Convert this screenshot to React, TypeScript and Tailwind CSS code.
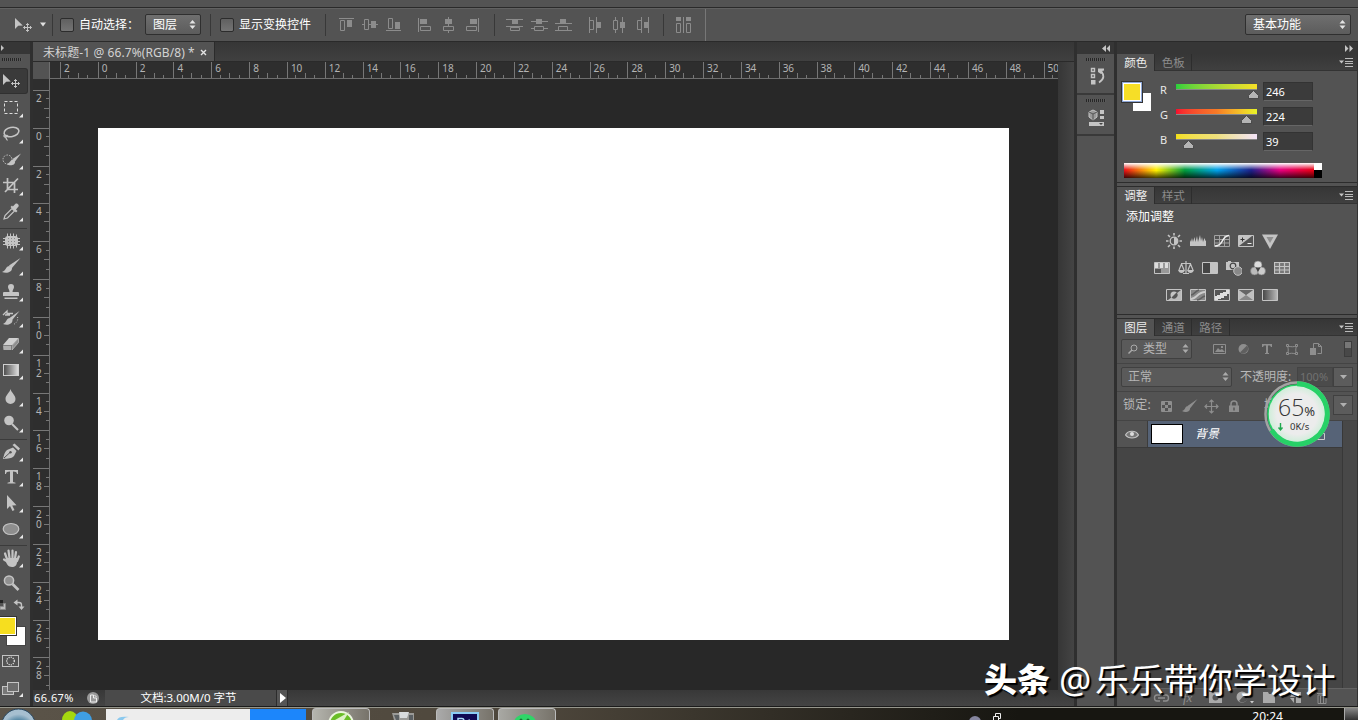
import type { ReactNode } from "react";
import clsx from "clsx";

function Svg({ w, h, children, className }: { w: number; h: number; children: ReactNode; className?: string }) {
  return (
    <svg width={w} height={h} viewBox={`0 0 ${w} ${h}`} className={clsx("shrink-0", className)} fill="none">
      {children}
    </svg>
  );
}

const C = "#c4c4c4";

const moveShape = (
  <>
    <path d="M3 5v11l3.2-3.2 4.6-.3z" fill={C} />
    <path
      d="M15.5 10.5v8M11.5 14.5h8M14 12l1.5-1.5L17 12M14 17l1.5 1.5L17 17M13 13l-1.5 1.5L13 16M18 13l1.5 1.5L18 16"
      stroke={C}
    />
  </>
);

type Tool = { id: string; icon: ReactNode; menu?: boolean; gap?: boolean };

const tools: Tool[] = [
  { id: "move", icon: moveShape },
  { id: "marquee", menu: true, icon: <rect x="4.5" y="5.5" width="13" height="12" stroke="#dcdcdc" strokeDasharray="3 2" /> },
  {
    id: "lasso",
    menu: true,
    icon: (
      <>
        <ellipse cx="11.5" cy="10" rx="7.5" ry="4.6" transform="rotate(-12 11.5 10)" stroke={C} strokeWidth="1.6" />
        <path d="M5 12.5c-2 1-1 3 .8 2.4S8 13 6 13.5c-1 2 0 3 1.5 5" stroke={C} strokeWidth="1.2" />
      </>
    ),
  },
  {
    id: "quick-select",
    menu: true,
    icon: (
      <>
        <circle cx="7.5" cy="11.5" r="4.5" stroke={C} strokeDasharray="1.5 1.3" />
        <path d="M21 5.5 12.5 11l2.3 2.8z" fill={C} />
        <path d="M13.5 11.5c-3.5 0-3 4-7 4.5 3 2.5 9 1.5 8.5-2.5z" fill={C} />
      </>
    ),
  },
  {
    id: "crop",
    menu: true,
    icon: <path d="M7.5 4v11.5H18M3 8.5h11.5V19M5 18 18 4.5" stroke={C} strokeWidth="1.7" />,
  },
  {
    id: "eyedropper",
    menu: true,
    icon: (
      <>
        <path d="m4 19 1-3.5 7-7 2.500 2.5-7 7z" stroke={C} strokeWidth="1.2" />
        <path d="m10.5 7 5.5 5.5 1.5-1.5L16 9.500l2.5-3c1-1.5-1.5-4-3-2.8L12.8 6.500 12 5.5z" fill={C} />
      </>
    ),
  },
  {
    id: "healing",
    menu: true,
    gap: true,
    icon: (
      <>
        <rect x="5" y="7" width="13" height="10" rx="3" fill={C} />
        <path d="M7.5 4.5v15M10.5 4.5v15M13.5 4.5v15M16.5 5.5v13M3 9.5h17M3 12.5h17M3 15.5h17" stroke={C} />
        <path d="M8 9.5h8M8 12.5h8M8 15.5h8" stroke="#8a8a8a" strokeDasharray="1 2" />
      </>
    ),
  },
  {
    id: "brush",
    menu: true,
    icon: (
      <>
        <path d="M20.5 4 9 11.5l2.5 3z" fill={C} />
        <path d="M9.5 12c-4 0-3 4.500-7.500 6 4 1.5 10 .8 10-4z" fill={C} />
      </>
    ),
  },
  {
    id: "stamp",
    menu: true,
    icon: (
      <path
        d="M8 7a3 3 0 0 1 6 0c0 2-1.5 2.5-1.5 5H18q1 0 1 1v3H3v-3q0-1 1-1h5.5C9.5 9.5 8 9 8 7zM4.5 17.5h13V19h-13z"
        fill={C}
      />
    ),
  },
  {
    id: "history-brush",
    menu: true,
    icon: (
      <>
        <path d="M19.500 5 9.500 12l2.300 2.500z" fill={C} />
        <path d="M10 12c-4 0-3 4.500-7 6 3.500 1.500 9.500.8 9.500-4z" fill={C} />
        <path d="m3 9 4-4v2.5h6M5 9h5" stroke={C} strokeWidth="1.3" />
        <path d="M17.5 11c1 3-1 6-4 7.5" stroke={C} strokeDasharray="1 1.5" />
      </>
    ),
  },
  {
    id: "eraser",
    menu: true,
    icon: (
      <>
        <path d="m3 13 6-7h9.5l-6 7z" fill="#d0d0d0" />
        <path d="M3 13.5h8V18H3.5z" fill="#b0b0b0" />
        <path d="m12 13.5 6.5-7v4L12 18z" fill="#8e8e8e" stroke={C} strokeWidth=".7" />
      </>
    ),
  },
  {
    id: "gradient",
    menu: true,
    icon: (
      <>
        <defs>
          <linearGradient id="toolGrad">
            <stop stopColor="#4a4a4a" />
            <stop offset="1" stopColor="#e0e0e0" />
          </linearGradient>
        </defs>
        <rect x="3.5" y="6.5" width="15" height="11" fill="url(#toolGrad)" stroke="#d0d0d0" />
      </>
    ),
  },
  { id: "blur", menu: true, icon: <path d="M10.5 4c1 4 5 6 5 10a5 5 0 0 1-10 0c0-4 4-6 5-10z" fill={C} /> },
  {
    id: "dodge",
    menu: true,
    icon: (
      <>
        <circle cx="9" cy="9.5" r="4.8" fill={C} />
        <path d="m12 13 6 6" stroke={C} strokeWidth="2" />
      </>
    ),
  },
  {
    id: "pen",
    menu: true,
    gap: true,
    icon: (
      <>
        <path d="M3 19c1-4 1.5-7 4-9l6-2.5 3.5 3.5-2.5 5c-2 2.500-6 2.500-11 3z" fill={C} />
        <path d="m12.500 5 6 5.500 1.500-2-5.500-5z" fill={C} />
        <path d="m4 18 6-5.5" stroke="#555" />
        <circle cx="10.5" cy="12.3" r="1.2" fill="#555" />
      </>
    ),
  },
  {
    id: "type",
    menu: true,
    icon: <path d="M5 5h13v4h-1c-.3-2-1.2-2.600-4-2.600V17l2.5.7v.8H7.5v-.8l2.5-.7V6.400C7.200 6.400 6.300 7 6 9H5z" fill={C} />,
  },
  { id: "path-select", menu: true, icon: <path d="M7 4v14l3-3 2.5 5 2-1-2.300-4.500 4.300-.3z" fill={C} /> },
  { id: "ellipse", menu: true, icon: <ellipse cx="11" cy="12" rx="7.8" ry="5.5" fill="#8e8e8e" stroke={C} strokeWidth="1.2" /> },
  {
    id: "hand",
    menu: true,
    gap: true,
    icon: (
      <>
        <path
          d="M7 13 5 7.5M9.500 12 8.500 4.500M12.500 12V4.500M15 12.500 16 6M17 15l1.800-4.500M8 16l-4-2.500"
          stroke={C}
          strokeWidth="2.2"
          strokeLinecap="round"
        />
        <path d="M6 12h11v4c0 3-2 5-5 5-4 0-5-3-6-5z" fill={C} />
      </>
    ),
  },
  {
    id: "zoom",
    icon: (
      <>
        <circle cx="9" cy="9.5" r="4.6" fill="#909090" stroke={C} strokeWidth="1.5" />
        <path d="m12.5 13 6 6" stroke={C} strokeWidth="2.6" />
      </>
    ),
  },
];

function Toolbar() {
  return (
    <aside className="flex w-[33px] shrink-0 flex-col border-r-[3px] border-[#2f2f2f] bg-[#535353]">
      <div className="flex h-3 shrink-0 items-center bg-[#363636]">
        <Svg w={6} h={8}>
          <path d="m1 1 3 3-3 3z" fill={C} />
        </Svg>
      </div>
      <Grip className="ml-0.5 mt-1 h-[3px] w-5 shrink-0" />
      <div className="mt-2 flex flex-col">
        {tools.map((t) => (
          <div
            key={t.id}
            className={clsx(
              "flex w-[27px] shrink-0",
              t.id === "move" ? "h-[27px]" : "h-[26.05px]",
              t.gap && "mt-0.5 border-t border-[#3b3b3b]"
            )}
          >
            <div className={clsx("h-6", t.id === "move" && "w-[27px] rounded-r-xs bg-[#3a3a3a] ring-1 ring-[#303030]")}>
              <Svg w={24} h={26}>
                {t.icon}
                {t.menu && <path d="M23 17.5v4h-4z" fill="#e8e8e8" />}
              </Svg>
            </div>
          </div>
        ))}
      </div>
      <Svg w={30} h={14} className="mt-px">
        <path d="M0 2h3v3H0z" fill="#222" />
        <path d="M3.5 5.500h2v6H0v-3h3.500z" fill="#bbb" stroke="#888" />
        <path d="M17 4.500h2q2.500 0 2.500 2.500v2" stroke={C} strokeWidth="1.4" />
        <path d="M17.500 1.500v6l-4-3zM18.500 8.500h6l-3 3.500z" fill={C} />
      </Svg>
      <div className="relative mt-[5px] h-[30px] w-[27px] shrink-0">
        <div className="absolute left-[7px] top-[10px] size-[18px] bg-white ring-1 ring-[#444]" />
        <div className="absolute left-0 top-0 h-[18px] w-4 border border-l-0 border-white bg-[#f6de1f] ring-1 ring-[#333]" />
      </div>
      <Svg w={27} h={24} className="mt-[3px]">
        <rect x="2.5" y="5.5" width="16" height="11" stroke={C} />
        <circle cx="10.5" cy="11" r="3.8" stroke="#ddd" strokeWidth="1.3" strokeDasharray="1.2 1" />
      </Svg>
      <Svg w={27} h={26} className="mt-0.5">
        <rect x="2.5" y="10.5" width="11" height="8" fill="#777" stroke={C} />
        <rect x="7.5" y="6.5" width="11" height="9" fill="#6b6b6b" stroke={C} />
        <path d="M23 17v4h-4z" fill="#e8e8e8" />
      </Svg>
    </aside>
  );
}

function Grip({ className }: { className?: string }) {
  return <div className={clsx("bg-[repeating-linear-gradient(90deg,#262626_0_1px,#5a5a5a_1px_2px)]", className)} />;
}

function UpDown({ color = "#e4e4e4" }: { color?: string }) {
  return (
    <Svg w={7} h={9}>
      <path d="M3.5 0 6.5 3.5h-6zM3.5 9 .5 5.5h6z" fill={color} />
    </Svg>
  );
}

function Select({ label, className }: { label: string; className: string }) {
  return (
    <div
      className={clsx(
        "flex shrink-0 items-center justify-between rounded-[2px] border border-[#2f2f2f] bg-linear-to-b from-[#6f6f6f] to-[#5c5c5c] pl-[7px] pr-1 text-white",
        className
      )}
    >
      {label}
      <UpDown />
    </div>
  );
}

function Check() {
  return <div className="size-[14px] shrink-0 rounded-[2px] border border-[#2c2c2c] bg-linear-to-b from-[#606060] to-[#747474]" />;
}

function Sep({ className }: { className?: string }) {
  return <div className={clsx("h-[22px] w-px shrink-0 bg-[#383838]", className)} />;
}

const G = "#8c8c8c";

const alignIcons: { id: string; hollow: string; solid: string; line: string }[][] = [
  [
    { id: "top", hollow: "M7.5 7.5h4v10h-4z", solid: "M14 7h5v7h-5z", line: "M6 5.5h15" },
    { id: "vmid", hollow: "M7.5 6.5h4v10h-4z", solid: "M14 8h5v7h-5z", line: "M5 11.5h2M12 11.5h9" },
    { id: "bottom", hollow: "M7.5 5.5h4v10h-4z", solid: "M14 9h5v7h-5z", line: "M5 17.5h15" },
  ],
  [
    { id: "left", hollow: "M7.5 13.5h10v4h-10z", solid: "M7 6h7v5H7z", line: "M5.5 5v14" },
    { id: "hmid", hollow: "M6.5 13.5h10v4h-10z", solid: "M8 6h7v5H8z", line: "M11.5 4v2M11.5 11v3M11.5 17v3" },
    { id: "right", hollow: "M5.5 13.5h10v4h-10z", solid: "M9 6h7v5H9z", line: "M17.5 5v14" },
  ],
  [
    { id: "dt", hollow: "M7.5 14.5h9v3h-9z", solid: "M9 6h6v5H9z", line: "M3 6.5h17M3 13.5h17" },
    { id: "dv", hollow: "M7.5 13.5h9v4h-9z", solid: "M9 6h6v5H9z", line: "M4 8.5h17M4 15.5h4M16 15.5h5" },
    { id: "db", hollow: "M7.5 13.5h9v4h-9z", solid: "M9 6h6v5H9z", line: "M4 10.5h17M4 17.5h17" },
  ],
  [
    { id: "dl", hollow: "M6.5 7.5h4v9h-4z", solid: "M14 9h4v6h-4z", line: "M6.5 4v16M13.5 4v16" },
    { id: "dh", hollow: "M6.5 7.5h4v9h-4z", solid: "M13 9h5v6h-5z", line: "M8.5 4v4M8.5 16v4M15.5 4v16" },
    { id: "dr", hollow: "M6.5 7.5h4v9h-4z", solid: "M13 9h4v6h-4z", line: "M10.5 4v16M17.5 4v16" },
  ],
];

function AlignGroup({ index, className }: { index: number; className: string }) {
  return (
    <div className={clsx("flex shrink-0", className)}>
      {alignIcons[index].map((a) => (
        <Svg key={a.id} w={24} h={24}>
          <path d={a.hollow} stroke={G} />
          <path d={a.solid} fill={G} />
          <path d={a.line} stroke={G} />
        </Svg>
      ))}
    </div>
  );
}

function OptionsBar() {
  return (
    <div className="flex h-[35px] shrink-0 items-center border-b border-t border-b-[#2a2a2a] border-t-[#2a2a2a] bg-[#535353] text-white shadow-[inset_0_1px_0_#616161]">
      <Svg w={24} h={24} className="ml-3">
        {moveShape}
      </Svg>
      <Svg w={8} h={5} className="ml-[3px]">
        <path d="M1 .5h6L4 4.5z" fill="#e0e0e0" />
      </Svg>
      <Sep className="ml-[5px] mr-[7px]" />
      <Check />
      <span className="ml-[5px] w-[66px]">自动选择：</span>
      <Select label="图层" className="h-[21px] w-14" />
      <Sep className="ml-[9px] mr-[9px]" />
      <Check />
      <span className="ml-[5px] w-[86px] whitespace-nowrap">显示变换控件</span>
      <Sep />
      <AlignGroup index={0} className="ml-[7px]" />
      <AlignGroup index={1} className="ml-2" />
      <Sep className="ml-[9px]" />
      <AlignGroup index={2} className="ml-2" />
      <AlignGroup index={3} className="ml-2" />
      <Sep className="ml-2" />
      <Svg w={24} h={24} className="ml-[7px]">
        <path d="M5 4h5v4H5zM12 4h1v16h-1zM15 4h5v4h-5z" fill={G} />
        <path d="M5.5 10.5h4v9h-4zM15.5 10.5h4v9h-4z" stroke={G} />
      </Svg>
      <div className="ml-[10px] h-8 w-px bg-[#777]" />
      <Select label="基本功能" className="ml-auto mr-[7px] h-[21px] w-[106px]" />
    </div>
  );
}

const hLabels = [2, ...Array.from({ length: 26 }, (_, i) => i * 2)];
const vLabels = [2, ...Array.from({ length: 15 }, (_, i) => i * 2)];

function TopRuler() {
  return (
    <div className="flex h-[17px] overflow-hidden border-b border-[#6e6e6e] bg-[#2e2e2e] pl-[10px]">
      {hLabels.map((n, i) => (
        <div key={i} className="relative flex h-4 w-[37.84px] shrink-0 items-end border-l border-[#777]">
          <span className="absolute left-[3px] top-0 text-[10px] leading-[13px] tracking-[-0.1px] text-[#b4b4b4]">{n}</span>
          {[0, 1, 2].map((k) => (
            <i
              key={k}
              className={clsx("w-[9.46px] shrink-0 border-r border-[#777]", k === 1 ? "h-[5px]" : "h-[3px]", k === 0 && "-ml-px")}
            />
          ))}
        </div>
      ))}
    </div>
  );
}

function SideRuler() {
  return (
    <div className="flex w-[17px] shrink-0 flex-col overflow-hidden border-r border-[#6e6e6e] bg-[#2e2e2e] pt-[11px]">
      {vLabels.map((n, i) => (
        <div key={i} className="relative flex h-[37.84px] shrink-0 flex-col items-end border-t border-[#777]">
          <div className="absolute left-[3px] top-0.5 text-[10px] leading-[10px] text-[#b4b4b4]">
            {String(n)
              .split("")
              .map((d, k) => (
                <div key={k}>{d}</div>
              ))}
          </div>
          {[0, 1, 2].map((k) => (
            <i
              key={k}
              className={clsx("h-[9.46px] shrink-0 border-b border-[#777]", k === 1 ? "w-[5px]" : "w-[3px]", k === 0 && "-mt-px")}
            />
          ))}
        </div>
      ))}
    </div>
  );
}

function DocumentWindow() {
  return (
    <main className="flex w-[1041px] shrink-0 flex-col overflow-hidden">
      <div className="flex h-5 shrink-0 border-b border-[#2a2a2a] bg-linear-to-b from-[#363636] to-[#404040]">
        <div className="flex w-[182px] items-center border-r border-[#2b2b2b] bg-[#535353] pl-2.5 pt-0.5 text-[#d2d2d2]">
          <span className="w-[156px] whitespace-nowrap tracking-[0.09px]">未标题-1 @ 66.7%(RGB/8) *</span>
          <Svg w={9} h={9}>
            <path d="m2 2 5 5M7 2 2 7" stroke="#e5e5e5" strokeWidth="1.4" />
          </Svg>
        </div>
      </div>
      <div className="flex min-h-0 flex-1">
        <div className="flex w-[1025px] flex-col">
          <div className="flex h-[17px] shrink-0">
            <div className="w-[17px] shrink-0 border-r border-[#6e6e6e] bg-[#535353]" />
            <div className="min-w-0 flex-1">
              <TopRuler />
            </div>
          </div>
          <div className="flex min-h-0 flex-1">
            <SideRuler />
            <div className="flex-1 bg-[#282828] pl-12 pt-[49px]">
              <div className="h-[512px] w-[911px] bg-white" />
            </div>
          </div>
        </div>
        <div className="w-4 bg-linear-to-r from-[#363636] to-[#444]" />
      </div>
      <div className="flex h-4 shrink-0 items-center bg-linear-to-b from-[#383838] to-[#444] text-white">
        <span className="w-[51px] pl-px text-[11px] tracking-[0.45px]">66.67%</span>
        <Svg w={20} h={14}>
          <circle cx="9" cy="7" r="6" fill="#999" />
          <path d="M6.5 4h3v3h3v4h-6zM10.5 4l2 2" stroke="#eee" />
        </Svg>
        <div className="ml-px flex h-4 w-[171px] items-center justify-center bg-[#4a4a4a] pr-1 text-[11.5px]">文档:3.00M/0 字节</div>
        <div className="flex h-4 w-3 items-center justify-center border-x border-[#2c2c2c] bg-[#555]">
          <Svg w={7} h={10}>
            <path d="m1 0 6 5-6 5z" fill="#fff" />
          </Svg>
        </div>
      </div>
    </main>
  );
}

function Dock() {
  return (
    <div className="flex w-[43px] shrink-0 flex-col border-x-[3px] border-[#2f2f2f] bg-[#535353]">
      <div className="flex h-3 items-center justify-end bg-[#363636] pr-1">
        <Svg w={8} h={7}>
          <path d="M4 0v7L0 3.5zM8 0v7L4.5 3.5z" fill={C} />
        </Svg>
      </div>
      <div className="flex h-[41px] flex-col items-center border-b-2 border-[#393939] pt-1">
        <Grip className="h-[3px] w-5" />
        <Svg w={18} h={22} className="mt-1">
          <path d="M4.500 3.500h3v3h-3zM4.500 9.500h3v3h-3z" stroke={C} strokeWidth="1.400" />
          <path d="M4 15h4.500v4.500H4z" fill={C} />
          <path d="M11 3.500h6v2l-2 .5 1 2-2 1-3-2z" fill={C} />
          <path d="M14 6c3.500 4 3.500 8-2 11.500" stroke={C} strokeWidth="1.8" />
        </Svg>
      </div>
      <div className="flex h-[41px] flex-col items-center border-b-2 border-[#393939] pt-1">
        <Grip className="h-[3px] w-5" />
        <Svg w={18} h={22} className="mt-1">
          <path d="m6 4 4 2v5l-4 3-4-3V6z" fill="#999" stroke={C} />
          <path d="m2 6 4 2 4-2M6 8v6" stroke="#555" />
          <path d="M13 4h4v4h-4zM13 10h4v3h-4zM2 16h15v4H2z" fill={C} />
          <path d="M12 17h4l-2 2z" fill="#444" />
        </Svg>
      </div>
    </div>
  );
}

function PanelTabs({ tabs }: { tabs: string[] }) {
  return (
    <div className="flex h-[17px] shrink-0 bg-linear-to-b from-[#363636] to-[#404040] shadow-[inset_0_-1px_0_#333]">
      {tabs.map((t, i) => (
        <div
          key={t}
          className={clsx(
            "flex w-[37.5px] items-center justify-center whitespace-nowrap border-r border-[#2d2d2d] pl-px text-[11.5px]",
            i === 0 ? "bg-[#535353] text-[#eee]" : "text-[#8c8c8c]"
          )}
        >
          {t}
        </div>
      ))}
      <Svg w={14} h={17} className="ml-auto mr-1">
        <path d="M0 6.500h5L2.500 9.500z" fill={C} />
        <path d="M6 4.500h8M6 7.500h8M6 9.500h8M6 12.500h8" stroke="#bbb" />
      </Svg>
    </div>
  );
}

const channels = [
  { name: "R", value: 246, bar: "bg-linear-to-r from-[#27d03c] to-[#f6df27]" },
  { name: "G", value: 224, bar: "bg-linear-to-r from-[#f60a2f] via-[#f77a26] to-[#e6f327]" },
  { name: "B", value: 39, bar: "bg-linear-to-r from-[#f3df15] via-[#efe07c] to-[#f3e3f8]" },
];

function ColorPanel() {
  return (
    <section className="flex h-[129px] shrink-0 flex-col border-b border-[#2c2c2c]">
      <PanelTabs tabs={["颜色", "色板"]} />
      <div className="flex h-[92px] pt-[11px]">
        <div className="relative ml-[5px] w-[38px] shrink-0">
          <div className="absolute left-[11px] top-[11px] size-[18px] bg-white" />
          <div className="absolute left-0 top-0 size-5 border border-[#8fa8d8] bg-white p-px ring-1 ring-[#333]">
            <div className="size-full bg-[#f6de27]" />
          </div>
        </div>
        <div className="flex flex-col">
          {channels.map((ch) => (
            <div key={ch.name} className="flex h-[25px]">
              <span className="w-4 text-[11px] leading-4 text-[#e8e8e8]">{ch.name}</span>
              <div className="mt-0.5 w-[81px]">
                <div className={clsx("h-1.5 border-b border-[#888]", ch.bar)} />
                <div className="flex" style={{ paddingLeft: (ch.value / 255) * 80 - 5 }}>
                  <Svg w={11} h={9}>
                    <path d="M5.5 .5 10.500 5.500v3H.5v-3z" fill="#b5b5b5" stroke="#3b3b3b" strokeWidth=".8" />
                  </Svg>
                </div>
              </div>
              <div className="ml-1.5 flex h-[19px] w-[50px] items-center border border-[#333] border-b-[#666] bg-[#3b3b3b] pl-0.5 text-[11px] text-white">
                {ch.value}
              </div>
            </div>
          ))}
        </div>
      </div>
      <div className="ml-[7px] flex h-[15px] w-[198px]">
        <div className="w-[190px] bg-[linear-gradient(180deg,#fff_0%,#fff0_45%,#0000_50%,#000b_100%),linear-gradient(90deg,#e80c16,#fff000_17%,#009a3c_32%,#00a0e9_49%,#1d2088_67%,#e4007f_82%,#e60012)]" />
        <div className="w-2">
          <div className="h-[7px] bg-white" />
          <div className="h-2 bg-black" />
        </div>
      </div>
    </section>
  );
}

const adjustRows: { id: string; art: ReactNode }[][] = [
  [
    {
      id: "brightness",
      art: (
        <>
          <circle cx="8" cy="8" r="3.8" stroke={C} strokeWidth="1.3" />
          <path d="M8 4.2a3.800 3.800 0 0 1 0 7.600z" fill={C} />
          <path
            d="M8 0v2.500M8 13.500V16M0 8h2.500M13.500 8H16M2 2l2 2M12 12l2 2M2 14l2-2M12 4l2-2"
            stroke={C}
            strokeWidth="1.6"
          />
        </>
      ),
    },
    {
      id: "levels",
      art: <path d="M-.5 13V6l1.500 3 1-4 1 4 1.500-5 1 5L7 3l1 6 2-7 1 6 1-4 1 5 1.500-4 1 3 1-1v6z" fill={C} />,
    },
    {
      id: "curves",
      art: (
        <>
          <path d="M.5 2.500h15v11H.5zM5.500 3v10M10.500 3v10M1 6.500h14M1 10h14" stroke="#a2a2a2" />
          <path d="M1 13c9 0 6-10 14-10.500" stroke="#eee" strokeWidth="1.5" />
        </>
      ),
    },
    {
      id: "exposure",
      art: (
        <>
          <path d="M.5 2.500h15v11H.5z" fill="#555" stroke={C} />
          <path d="M1 13V3h13z" fill={C} />
          <path d="M2.500 6.500h4M4.500 4.500v4" stroke="#333" />
          <path d="M9.500 10.500h4" stroke="#eee" />
        </>
      ),
    },
    {
      id: "vibrance",
      art: (
        <>
          <path d="M0 1.500h16L8 16z" fill={C} />
          <path d="M4.500 4h7l-3.500 6z" fill="#8f8f8f" />
        </>
      ),
    },
  ],
  [
    {
      id: "hue",
      art: (
        <>
          <path d="M.5 2.500h15v11H.5z" fill="#999" stroke={C} />
          <path d="M1 3h3v5H1zM6 3h3v5H6zM11 3h3v5h-3z" fill="#ddd" />
          <path d="M1 9h6v4H1z" fill="#555" />
        </>
      ),
    },
    {
      id: "balance",
      art: (
        <>
          <path d="M8 1v12M3 3.500h10M3.500 4 1 10M3.500 4 6 10M12.500 4 10 10M12.500 4 15 10M5 13.500h6" stroke={C} strokeWidth="1.2" />
          <path d="M0 10h7q-1 3-3.500 3T0 10zM9 10h7q-1 3-3.500 3T9 10z" fill={C} />
        </>
      ),
    },
    {
      id: "bw",
      art: (
        <>
          <path d="M.5 2.500h15v11H.5z" fill="#444" stroke={C} />
          <path d="M8 3h7v10H8z" fill={C} />
        </>
      ),
    },
    {
      id: "photo-filter",
      art: (
        <>
          <path d="M0 2h2V1h3v1h8v8H0z" fill={C} />
          <circle cx="7" cy="6" r="2.800" fill={C} stroke="#444" strokeWidth="1.200" />
          <circle cx="12" cy="11" r="4.300" fill="#888" stroke={C} />
        </>
      ),
    },
    {
      id: "mixer",
      art: (
        <>
          <circle cx="8" cy="5" r="4" fill="#ddd" stroke="#777" strokeWidth=".6" />
          <circle cx="4.500" cy="11" r="4" fill="#bbb" stroke="#777" strokeWidth=".6" />
          <circle cx="11.500" cy="11" r="4" fill="#ccc" stroke="#777" strokeWidth=".6" />
          <path d="M5.500 7.500h5L8 12z" fill="#444" />
        </>
      ),
    },
    {
      id: "lookup",
      art: <path d="M.5 2.500h15v11H.5zM5.500 3v10M10.500 3v10M1 6.500h14M1 10h14" fill="#777" stroke={C} strokeWidth="1.2" />,
    },
  ],
  [
    {
      id: "invert",
      art: (
        <>
          <path d="M.5 2.500h15v11H.5z" fill="#555" stroke={C} />
          <path d="M15 3v10H2z" fill="#bbb" />
          <circle cx="8" cy="8" r="3.500" fill="#c4c4c4" />
          <path d="M10.500 5.500a3.500 3.500 0 0 1-5 5z" fill="#555" />
        </>
      ),
    },
    {
      id: "posterize",
      art: (
        <>
          <path d="M.5 2.500h15v11H.5z" fill="#888" stroke={C} />
          <path d="M1 12c5 0 7-7 14-7" stroke="#ccc" strokeWidth="2" />
          <path d="M1 8c3 0 4-4 8-5M7 13c4 0 4-3 8-4" stroke="#606060" strokeWidth="1.5" />
        </>
      ),
    },
    {
      id: "threshold",
      art: (
        <>
          <path d="M.5 2.500h15v11H.5z" fill="#555" stroke={C} />
          <path d="M1 9h2V8h3V6h3V5h3V3h3v4h-2v2h-3v2H7v1H4v1H1z" fill="#ddd" />
        </>
      ),
    },
    {
      id: "selective",
      art: (
        <>
          <path d="M.5 2.500h15v11H.5z" fill="#888" stroke={C} />
          <path d="m1 3 7 5-7 5zM15 3 8 8l7 5z" fill="#c0c0c0" />
          <path d="m1 3 7 5 7-5z" fill="#666" />
        </>
      ),
    },
    {
      id: "gradient-map",
      art: (
        <>
          <defs>
            <linearGradient id="mapGrad">
              <stop stopColor="#444" />
              <stop offset="1" stopColor="#bbb" />
            </linearGradient>
          </defs>
          <path d="M.5 2.500h15v11H.5z" fill="url(#mapGrad)" stroke={C} />
        </>
      ),
    },
  ],
];

function AdjustPanel() {
  return (
    <section className="mt-[3px] flex h-[129px] shrink-0 flex-col border-b border-t border-[#2c2c2c]">
      <PanelTabs tabs={["调整", "样式"]} />
      <div className="h-[23px] shrink-0 pl-[9px] pt-1 leading-[18px] text-white">添加调整</div>
      {adjustRows.map((row, r) => (
        <div key={r} className={clsx("flex h-[27px] shrink-0 items-center", r === 1 ? "pl-[33px]" : "pl-[45px]")}>
          {row.map((a) => (
            <div key={a.id} className="flex w-6 justify-center">
              <Svg w={16} h={16}>{a.art}</Svg>
            </div>
          ))}
        </div>
      ))}
    </section>
  );
}

function DimSelect({ label, className, search }: { label: string; className: string; search?: boolean }) {
  return (
    <div
      className={clsx(
        "flex h-5 shrink-0 items-center rounded-[2px] border border-[#404040] bg-[#5a5a5a] px-[6px] text-[#b5b5b5]",
        className
      )}
    >
      {search && (
        <Svg w={15} h={12}>
          <circle cx="6" cy="5" r="3" stroke="#aaa" />
          <path d="M4 7 .5 10.500" stroke="#aaa" strokeWidth="1.4" />
        </Svg>
      )}
      <span className="mr-auto">{label}</span>
      <div className="-mr-1">
        <UpDown color="#aaa" />
      </div>
    </div>
  );
}

function DropButton() {
  return (
    <div className="flex h-5 w-5 items-center justify-center border border-[#404040] bg-[#5c5c5c]">
      <Svg w={7} h={4}>
        <path d="M0 0h7L3.500 4z" fill="#b0b0b0" />
      </Svg>
    </div>
  );
}

function LayersPanel() {
  const dim = "#8e8e8e";
  return (
    <section className="mt-[3px] flex min-h-0 flex-1 flex-col border-t border-[#2c2c2c]">
      <PanelTabs tabs={["图层", "通道", "路径"]} />
      <div className="flex h-7 shrink-0 items-center border-b border-[#444] pb-0.5 pl-1">
        <DimSelect label="类型" search className="w-[71px]" />
        <Svg w={128} h={20} className="ml-[15px]">
          <path d="M6.500 5.500h12v9h-12z" stroke={dim} />
          <path d="m8 13 3-4 2 2 2-1 3 3zM14 7h2v2h-2z" fill={dim} />
          <circle cx="36.500" cy="10" r="5" fill={dim} />
          <path d="m33 13.500 7-7a5 5 0 0 1-7 7z" fill="#5f5f5f" />
          <path d="M55 5h10v3h-1l-1-1.500h-2V14h1v1h-4v-1h1V6.500h-2L56 8h-1z" fill={dim} />
          <path d="M80.500 7c4 1 6 1 9 0-1 3-1 5 0 8-4-1-6-1-9 0 1-3 1-5 0-8z" stroke={dim} />
          <path d="M79.500 5.500h2v2h-2zM88.500 5.500h2v2h-2zM79.500 13.500h2v2h-2zM88.500 13.500h2v2h-2z" fill="#555" stroke={dim} />
          <path d="M106.500 14V4.500h5l3 3v7h-4M111.500 4.500v3h3" stroke={dim} />
          <path d="M103 9h6v7h-6z" fill={dim} />
        </Svg>
        <div className="ml-auto mr-[5px] h-4 w-2 border border-[#3c3c3c] bg-[#484848]">
          <div className="h-1.5 bg-[#777]" />
        </div>
      </div>
      <div className="flex h-7 shrink-0 items-center border-b border-[#444] pb-0.5 pl-1 text-[#b8b8b8]">
        <DimSelect label="正常" className="w-[111px]" />
        <span className="ml-2 w-[57px] whitespace-nowrap">不透明度:</span>
        <div className="flex h-5 w-[36px] items-center border border-[#444] bg-[#4b4b4b] pl-0.5 text-[11px] text-[#717171]">100%</div>
        <DropButton />
      </div>
      <div className="flex h-[29px] shrink-0 items-center border-b border-[#444] pb-0.5 pl-1.5 text-[#b8b8b8]">
        <span className="w-[35px] whitespace-nowrap tracking-[0.3px]">锁定:</span>
        <Svg w={88} h={20} className="mt-0.5">
          <path d="M3.500 5.500h10v10h-10z" stroke={dim} />
          <path d="M4 6h3v3H4zM10 6h3v3h-3zM7 9h3v3H7zM4 12h3v3H4zM10 12h3v3h-3z" fill={dim} />
          <path d="m39.500 3-10 7 2.500 2.500zM30 10c-3.500 0-2 4-6 5 3 2 8.500 1 8-3z" fill={dim} />
          <path
            d="M53.500 4v13M47 10.500h13M51.500 6l2-2 2 2M51.500 15l2 2 2-2M49 8.500l-2 2 2 2M58 8.500l2 2-2 2"
            stroke={dim}
            strokeWidth="1.2"
          />
          <path d="M71 9.500h10V16H71z" fill={dim} />
          <path d="M73 10V8a3 3 0 0 1 6 0v2" stroke={dim} strokeWidth="1.5" />
          <path d="M76 11.500v3" stroke="#555" strokeWidth="1.5" />
        </Svg>
        <span className="ml-[18px] w-7 overflow-hidden whitespace-nowrap">填充:</span>
        <div className="ml-auto mr-1">
          <DropButton />
        </div>
      </div>
      <div className="flex min-h-0 flex-1 bg-[#454545]">
        <div className="w-[225px]">
          <div className="flex h-[27px] items-center border-b border-[#3a3a3a] bg-[#566377]">
            <div className="flex h-full w-[31px] items-center justify-center border-r border-[#3c3c3c] bg-[#535353]">
              <Svg w={14} h={10}>
                <path d="M.5 6C3 1 11 1 13.500 6c-3 4-10 4-13 0z" fill="#777" stroke={C} strokeWidth="1.2" />
                <circle cx="7" cy="5" r="2" fill="#ddd" />
              </Svg>
            </div>
            <div className="ml-[3px] h-5 w-8 border border-black bg-white" />
            <span className="ml-3 italic text-white">背景</span>
            <Svg w={9} h={14} className="ml-auto mr-4">
              <path d="M.5 6.500h7v6h-7z" stroke="#ccc" />
            </Svg>
          </div>
        </div>
        <div className="flex-1 border-l border-[#383838] bg-[#484848]" />
      </div>
      <div className="flex h-[18px] shrink-0 justify-end border-t border-[#636363] bg-[#535353]">
        <Svg w={205} h={17}>
          <path d="M8 6H5q-2.500 0-2.500 3T5 12h3M11 6h3q2.500 0 2.500 3T14 12h-3M6 9h7" stroke={dim} strokeWidth="1.4" />
          <text x="31" y="13" fill={dim} fontSize="13" fontStyle="italic" fontFamily="Liberation Serif, serif">
            fx
          </text>
          <path d="M57 3h13v11H57z" fill="#aaa" />
          <circle cx="63.500" cy="8.500" r="3" fill="#555" />
          <circle cx="90" cy="8" r="5.500" fill="#aaa" />
          <path d="m87 12 7-8a5 5 0 0 1-7 8z" fill="#555" />
          <path d="M98 12h4l-2 2.500z" fill="#ccc" />
          <path d="M111 3h5l1 2h6v9h-12z" fill="#aaa" />
          <path d="M141 3h8v11h-5V8h-6zM138 9h4v5z" fill="#aaa" />
          <path d="M166 6h8v8.500h-8zM165 4.500h10M168.500 7v7M171.500 7v7" stroke={dim} />
        </Svg>
      </div>
    </section>
  );
}

function Taskbar() {
  return (
    <footer className="h-[14px] shrink-0 overflow-hidden border-t border-[#1b1b1b]">
      <div className="flex h-[13px] border-t border-[#96968c] bg-linear-to-r from-[#5b5449] via-[#4d463b] via-40% to-[#171611] to-75%">
        <Svg w={106} h={12}>
          <defs>
            <radialGradient id="orb" cx="50%" cy="65%">
              <stop stopColor="#f0582b" />
              <stop offset=".45" stopColor="#e05f3c" />
              <stop offset=".65" stopColor="#5789a6" />
              <stop offset="1" stopColor="#a6bfd0" />
            </radialGradient>
          </defs>
          <circle cx="18.500" cy="18" r="17" fill="url(#orb)" stroke="#27455e" />
          <ellipse cx="70" cy="12" rx="8" ry="9" fill="#a5d80e" />
          <ellipse cx="83" cy="13" rx="9" ry="9.500" fill="#3f9fe4" />
        </Svg>
        <div className="mt-px w-36 bg-[#ededed]">
          <Svg w={30} h={11}>
            <path d="M11 11c1-3 5-4 12-3-3 0-5 1-6 3z" fill="#8bc9ee" />
          </Svg>
        </div>
        <div className="mt-px w-14 bg-[#1c86fb]" />
        <div className="ml-1.5 flex w-[58px] justify-center rounded-t-sm border border-b-0 border-[#bbb] bg-linear-to-r from-[#b5b5ae] to-[#77736a]">
          <Svg w={28} h={12}>
            <circle cx="14" cy="15" r="12" fill="#69bd27" stroke="#ecf5df" strokeWidth="2" />
            <path d="m8 11 14-8-5 8z" fill="#def2c8" />
          </Svg>
        </div>
        <div className="flex w-[66px] justify-center">
          <Svg w={24} h={12}>
            <path d="M1 5h22v7H3z" fill="#9a9a97" />
            <path d="M8 4h10l-2 6H9z" fill="#d8dbdd" />
            <path d="M3 7h5v5H5zM18 7h4v5h-4z" fill="#5b6063" />
          </Svg>
        </div>
        <div className="flex w-[58px] justify-center rounded-t-sm border border-b-0 border-[#bbb] bg-linear-to-r from-[#aaa] to-[#77736a]">
          <Svg w={30} h={12}>
            <path d="M1 3h28v9H1z" fill="#8ccdf4" />
            <path d="M3 5h24v7H3z" fill="#100a54" />
            <path d="M8 12V9.500h4q2 0 2 2.500M17 12l3-1" stroke="#a9dcf6" strokeWidth="1.5" />
          </Svg>
        </div>
        <div className="ml-1 flex w-[58px] justify-center rounded-t-sm border border-b-0 border-[#bbb] bg-linear-to-r from-[#a8a8a3] to-[#77736a]">
          <Svg w={28} h={12}>
            <ellipse cx="12" cy="14" rx="11" ry="9" fill="#2fd568" />
            <circle cx="8" cy="11" r="1.500" fill="#167334" />
            <circle cx="15" cy="11" r="1.500" fill="#167334" />
          </Svg>
        </div>
        <Svg w={60} h={12} className="ml-auto">
          <circle cx="27" cy="14" r="6" fill="#85859e" />
          <path d="M45.500 8.500h5v4h-5zM47.500 8V5.500h5v5h-2" stroke="#eee" />
        </Svg>
        <span className="ml-[244px] mr-[61px] text-[12px] leading-[17px] text-white">20:24</span>
        <div className="w-[14px] border-l border-[#aaa] bg-linear-to-b from-[#888] to-[#333]" />
      </div>
    </footer>
  );
}

function SpeedBall() {
  return (
    <div className="absolute left-[1264px] top-[381px] size-[66px]">
      <Svg w={66} h={66}>
        <defs>
          <radialGradient id="ball">
            <stop offset=".7" stopColor="#ececec" />
            <stop offset="1" stopColor="#cdeed8" />
          </radialGradient>
        </defs>
        <circle cx="33" cy="33" r="29" fill="url(#ball)" />
        <circle cx="33" cy="33" r="31.500" stroke="#a3a3a3" strokeWidth="2.500" />
        <circle cx="33" cy="33" r="29" stroke="#27d167" strokeWidth="1.5" />
        <path d="M33 2.800A30.200 30.200 0 1 1 7.500 49" stroke="#27d167" strokeWidth="5" />
        <path d="M16.500 42v7M14.500 46.500l2 2.500 2-2.500" stroke="#20a84f" strokeWidth="1.4" />
      </Svg>
      <div className="absolute left-[14px] top-[13px] flex items-baseline leading-[26px] text-[#333]">
        <span className="font-['Open_Sans',sans-serif] text-[23px] font-light">65</span>
        <span className="text-[13px]">%</span>
      </div>
      <span className="absolute left-[26px] top-10 text-[9.500px] leading-3 text-[#333]">0K/s</span>
    </div>
  );
}

function Watermark() {
  return (
    <div className="absolute left-[984px] top-[660px] flex items-center whitespace-nowrap leading-10 text-white [text-shadow:2px_2px_1px_#000]">
      <span className="w-[75px] text-[33px] font-black">头条</span>
      <span className="w-9 text-[36px]">@</span>
      <span className="text-[34.4px]">乐乐带你学设计</span>
    </div>
  );
}

export default function App() {
  return (
    <div className="relative flex h-[720px] w-[1358px] flex-col overflow-hidden bg-[#535353] font-['Noto_Sans','Noto_Sans_CJK_SC',sans-serif] text-[12px] leading-4">
      <div className="h-[7px] shrink-0 bg-[#535353]" />
      <OptionsBar />
      <div className="flex h-[664px] shrink-0">
        <Toolbar />
        <DocumentWindow />
        <Dock />
        <div className="flex w-[241px] shrink-0 flex-col border-r border-[#333]">
          <div className="flex h-3 shrink-0 items-center justify-end bg-[#363636] pr-1">
            <Svg w={8} h={7}>
              <path d="M0 0v7l3.500-3.500zM4.500 0v7L8 3.500z" fill={C} />
            </Svg>
          </div>
          <ColorPanel />
          <AdjustPanel />
          <LayersPanel />
        </div>
      </div>
      <Taskbar />
      <SpeedBall />
      <Watermark />
    </div>
  );
}
